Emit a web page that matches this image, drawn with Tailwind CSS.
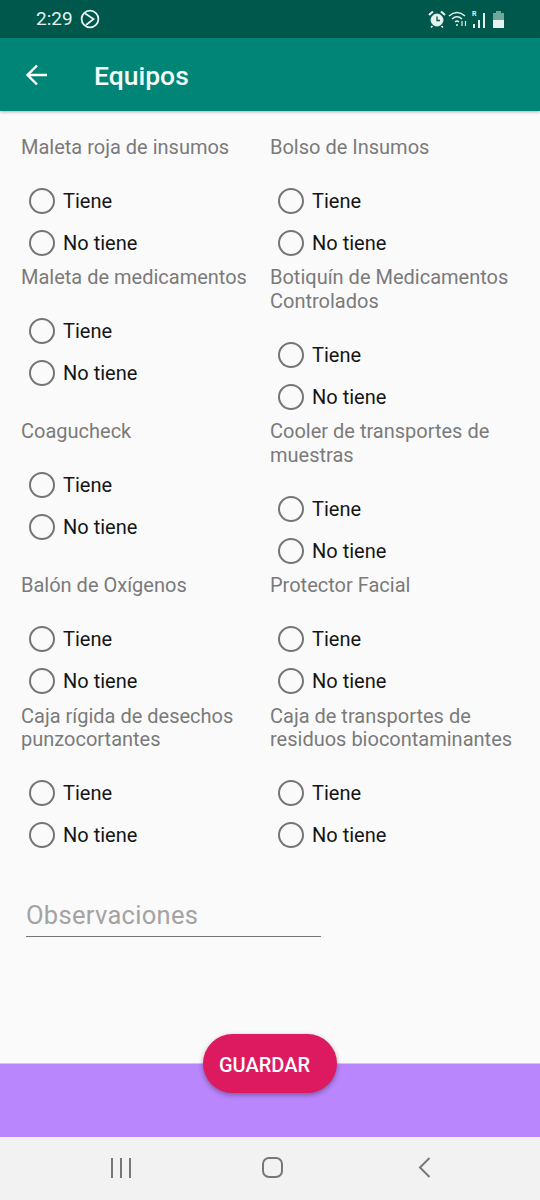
<!DOCTYPE html>
<html lang="en">
<head>
    <meta charset="UTF-8">
    <meta name="viewport" content="width=device-width, initial-scale=1.0">
    <title>Equipos</title>
    <script src="https://cdn.jsdelivr.net/npm/@tailwindcss/browser@4"></script>
</head>
<body class="bg-[#fafafa] font-['Roboto',sans-serif]">
<div class="w-[540px] h-[1200px] flex flex-col overflow-hidden">

    <!-- status bar -->
    <div class="h-[38px] bg-[#00574b] flex items-center justify-between pl-[36px] pr-[36px] text-[#e6f2ef] shrink-0">
        <div class="flex items-center gap-[7px]">
            <span class="text-[19px]">2:29</span>
            <svg width="20" height="20" viewBox="0 0 20 20" fill="none" stroke="currentColor" stroke-width="1.8"><circle cx="10" cy="10" r="8.4"/><path d="M4.5 4 L13.5 10 L6 16"/></svg>
        </div>
        <div class="flex items-center">
            <svg width="20" height="20" viewBox="0 0 20 20" fill="none" stroke="currentColor"><circle cx="10" cy="11" r="6" fill="currentColor"/><path d="M2 6 L6 2.5 M18 6 L14 2.5" stroke-width="2.2"/><path d="M10 7.5 V11.5 H13" stroke="#00574b" stroke-width="1.3"/><path d="M5.5 17 L4 18.5 M14.5 17 L16 18.5" stroke-width="1.6"/></svg>
            <svg class="ml-[1px]" width="21" height="20" viewBox="0 0 21 20" fill="none" stroke="currentColor" stroke-width="1.5"><path d="M1 7 Q9 0 17 7"/><path d="M4 10 Q9 5.5 14 10"/><path d="M7 13 Q9 11 11 13"/><circle cx="9" cy="16" r="1" fill="currentColor" stroke="none"/><path d="M14 12 V17 M17.5 17 V12" stroke-width="1.2"/></svg>
            <svg class="ml-[3px]" width="15" height="20" viewBox="0 0 15 20" fill="currentColor"><text x="0" y="7" font-size="7" font-family="Roboto" font-weight="700">R</text><rect x="1" y="15" width="2" height="4"/><rect x="6" y="11" width="2" height="8"/><rect x="11" y="4" width="2" height="15"/></svg>
            <div class="flex flex-col items-center ml-[6px] w-[11px] h-[17px]">
                <div class="w-[5px] h-[2px] bg-[#6fa79d]"></div>
                <div class="w-[11px] h-[7px] bg-[#6fa79d]"></div>
                <div class="w-[11px] h-[8px] bg-[#e6f2ef]"></div>
            </div>
        </div>
    </div>

    <!-- app bar -->
    <div class="h-[73px] bg-[#008577] flex items-center shadow-[0_1px_3px_rgba(0,0,0,0.3)] text-white shrink-0 relative">
        <svg class="ml-[25px]" width="24" height="24" viewBox="0 0 24 24" fill="none" stroke="currentColor" stroke-width="2.4"><path d="M22 12 H2.5 M12 2.5 L2.5 12 L12 21.5"/></svg>
        <h1 class="ml-[45px] pt-[3px] text-[26.5px] font-medium text-[#f2fbf9]">Equipos</h1>
    </div>

    <!-- form -->
    <div class="flex-1 pt-[25px]">
        <div class="grid grid-cols-[249px_1fr] pl-[21px]">

            <div class="pb-[2px]">
                <p class="text-[20px] leading-[23px] text-[#7a7a7a]">Maleta roja de insumos</p>
                <div class="mt-[21px] pl-[8px] flex flex-col">
                    <label class="h-[42px] flex items-center gap-[8px] text-[20px] text-[#151515]"><span class="w-[26px] h-[26px] rounded-full border-[2.5px] border-[#757575]"></span>Tiene</label>
                    <label class="h-[42px] flex items-center gap-[8px] text-[20px] text-[#151515]"><span class="w-[26px] h-[26px] rounded-full border-[2.5px] border-[#757575]"></span>No tiene</label>
                </div>
            </div>
            <div class="pb-[2px]">
                <p class="text-[20px] leading-[23px] text-[#7a7a7a]">Bolso de Insumos</p>
                <div class="mt-[21px] pl-[8px] flex flex-col">
                    <label class="h-[42px] flex items-center gap-[8px] text-[20px] text-[#151515]"><span class="w-[26px] h-[26px] rounded-full border-[2.5px] border-[#757575]"></span>Tiene</label>
                    <label class="h-[42px] flex items-center gap-[8px] text-[20px] text-[#151515]"><span class="w-[26px] h-[26px] rounded-full border-[2.5px] border-[#757575]"></span>No tiene</label>
                </div>
            </div>

            <div class="pb-[3px]">
                <p class="text-[20px] leading-[23px] text-[#7a7a7a]">Maleta de medicamentos</p>
                <div class="mt-[21px] pl-[8px] flex flex-col">
                    <label class="h-[42px] flex items-center gap-[8px] text-[20px] text-[#151515]"><span class="w-[26px] h-[26px] rounded-full border-[2.5px] border-[#757575]"></span>Tiene</label>
                    <label class="h-[42px] flex items-center gap-[8px] text-[20px] text-[#151515]"><span class="w-[26px] h-[26px] rounded-full border-[2.5px] border-[#757575]"></span>No tiene</label>
                </div>
            </div>
            <div class="pb-[2px]">
                <p class="text-[20px] leading-[24px] text-[#7a7a7a] -translate-y-[1px]">Botiquín de Medicamentos<br>Controlados</p>
                <div class="mt-[20px] pl-[8px] flex flex-col">
                    <label class="h-[42px] flex items-center gap-[8px] text-[20px] text-[#151515]"><span class="w-[26px] h-[26px] rounded-full border-[2.5px] border-[#757575]"></span>Tiene</label>
                    <label class="h-[42px] flex items-center gap-[8px] text-[20px] text-[#151515]"><span class="w-[26px] h-[26px] rounded-full border-[2.5px] border-[#757575]"></span>No tiene</label>
                </div>
            </div>

            <div class="pb-[3px]">
                <p class="text-[20px] leading-[23px] text-[#7a7a7a]">Coagucheck</p>
                <div class="mt-[21px] pl-[8px] flex flex-col">
                    <label class="h-[42px] flex items-center gap-[8px] text-[20px] text-[#151515]"><span class="w-[26px] h-[26px] rounded-full border-[2.5px] border-[#757575]"></span>Tiene</label>
                    <label class="h-[42px] flex items-center gap-[8px] text-[20px] text-[#151515]"><span class="w-[26px] h-[26px] rounded-full border-[2.5px] border-[#757575]"></span>No tiene</label>
                </div>
            </div>
            <div class="pb-[2px]">
                <p class="text-[20px] leading-[24px] text-[#7a7a7a] -translate-y-[1px]">Cooler de transportes de<br>muestras</p>
                <div class="mt-[20px] pl-[8px] flex flex-col">
                    <label class="h-[42px] flex items-center gap-[8px] text-[20px] text-[#151515]"><span class="w-[26px] h-[26px] rounded-full border-[2.5px] border-[#757575]"></span>Tiene</label>
                    <label class="h-[42px] flex items-center gap-[8px] text-[20px] text-[#151515]"><span class="w-[26px] h-[26px] rounded-full border-[2.5px] border-[#757575]"></span>No tiene</label>
                </div>
            </div>

            <div class="pb-[3px]">
                <p class="text-[20px] leading-[23px] text-[#7a7a7a]">Balón de Oxígenos</p>
                <div class="mt-[21px] pl-[8px] flex flex-col">
                    <label class="h-[42px] flex items-center gap-[8px] text-[20px] text-[#151515]"><span class="w-[26px] h-[26px] rounded-full border-[2.5px] border-[#757575]"></span>Tiene</label>
                    <label class="h-[42px] flex items-center gap-[8px] text-[20px] text-[#151515]"><span class="w-[26px] h-[26px] rounded-full border-[2.5px] border-[#757575]"></span>No tiene</label>
                </div>
            </div>
            <div class="pb-[3px]">
                <p class="text-[20px] leading-[23px] text-[#7a7a7a]">Protector Facial</p>
                <div class="mt-[21px] pl-[8px] flex flex-col">
                    <label class="h-[42px] flex items-center gap-[8px] text-[20px] text-[#151515]"><span class="w-[26px] h-[26px] rounded-full border-[2.5px] border-[#757575]"></span>Tiene</label>
                    <label class="h-[42px] flex items-center gap-[8px] text-[20px] text-[#151515]"><span class="w-[26px] h-[26px] rounded-full border-[2.5px] border-[#757575]"></span>No tiene</label>
                </div>
            </div>

            <div class="pb-[3px]">
                <p class="text-[20px] leading-[23px] text-[#7a7a7a]">Caja rígida de desechos<br>punzocortantes</p>
                <div class="mt-[21px] pl-[8px] flex flex-col">
                    <label class="h-[42px] flex items-center gap-[8px] text-[20px] text-[#151515]"><span class="w-[26px] h-[26px] rounded-full border-[2.5px] border-[#757575]"></span>Tiene</label>
                    <label class="h-[42px] flex items-center gap-[8px] text-[20px] text-[#151515]"><span class="w-[26px] h-[26px] rounded-full border-[2.5px] border-[#757575]"></span>No tiene</label>
                </div>
            </div>
            <div class="pb-[3px]">
                <p class="text-[20px] leading-[23px] text-[#7a7a7a]">Caja de transportes de<br>residuos biocontaminantes</p>
                <div class="mt-[21px] pl-[8px] flex flex-col">
                    <label class="h-[42px] flex items-center gap-[8px] text-[20px] text-[#151515]"><span class="w-[26px] h-[26px] rounded-full border-[2.5px] border-[#757575]"></span>Tiene</label>
                    <label class="h-[42px] flex items-center gap-[8px] text-[20px] text-[#151515]"><span class="w-[26px] h-[26px] rounded-full border-[2.5px] border-[#757575]"></span>No tiene</label>
                </div>
            </div>
        </div>

        <div class="ml-[26px] mt-[34px] w-[295px] h-[44px] border-b border-[#757575] text-[25.5px] leading-[44px] text-[#a3a3a3] tracking-[0.3px]">Observaciones</div>
    </div>

    <!-- bottom bar -->
    <div class="h-[74px] bg-[#b986fd] border-t border-[#d5c3ea] relative shrink-0">
        <button class="absolute left-[203px] -top-[30px] w-[134px] h-[59px] pr-[11px] pt-[3px] rounded-full bg-[#dd1a5f] text-white text-[20px] font-medium shadow-[0_2px_5px_rgba(0,0,0,0.35)]">GUARDAR</button>
    </div>

    <!-- nav bar -->
    <div class="h-[63px] bg-[#f2f2f2] flex items-center pl-[111px] pb-[2px] text-[#777777] shrink-0">
        <svg width="20" height="20" viewBox="0 0 20 20" fill="none" stroke="currentColor" stroke-width="2"><path d="M1 0 V20 M10 0 V20 M19 0 V20"/></svg>
        <svg class="ml-[131px]" width="21" height="21" viewBox="0 0 21 21" fill="none" stroke="currentColor" stroke-width="2"><rect x="1" y="1" width="19" height="19" rx="6"/></svg>
        <svg class="ml-[135px]" width="13" height="21" viewBox="0 0 13 21" fill="none" stroke="currentColor" stroke-width="2"><path d="M11.5 1 L2 10.5 L11.5 20"/></svg>
    </div>
</div>
</body>
</html>
